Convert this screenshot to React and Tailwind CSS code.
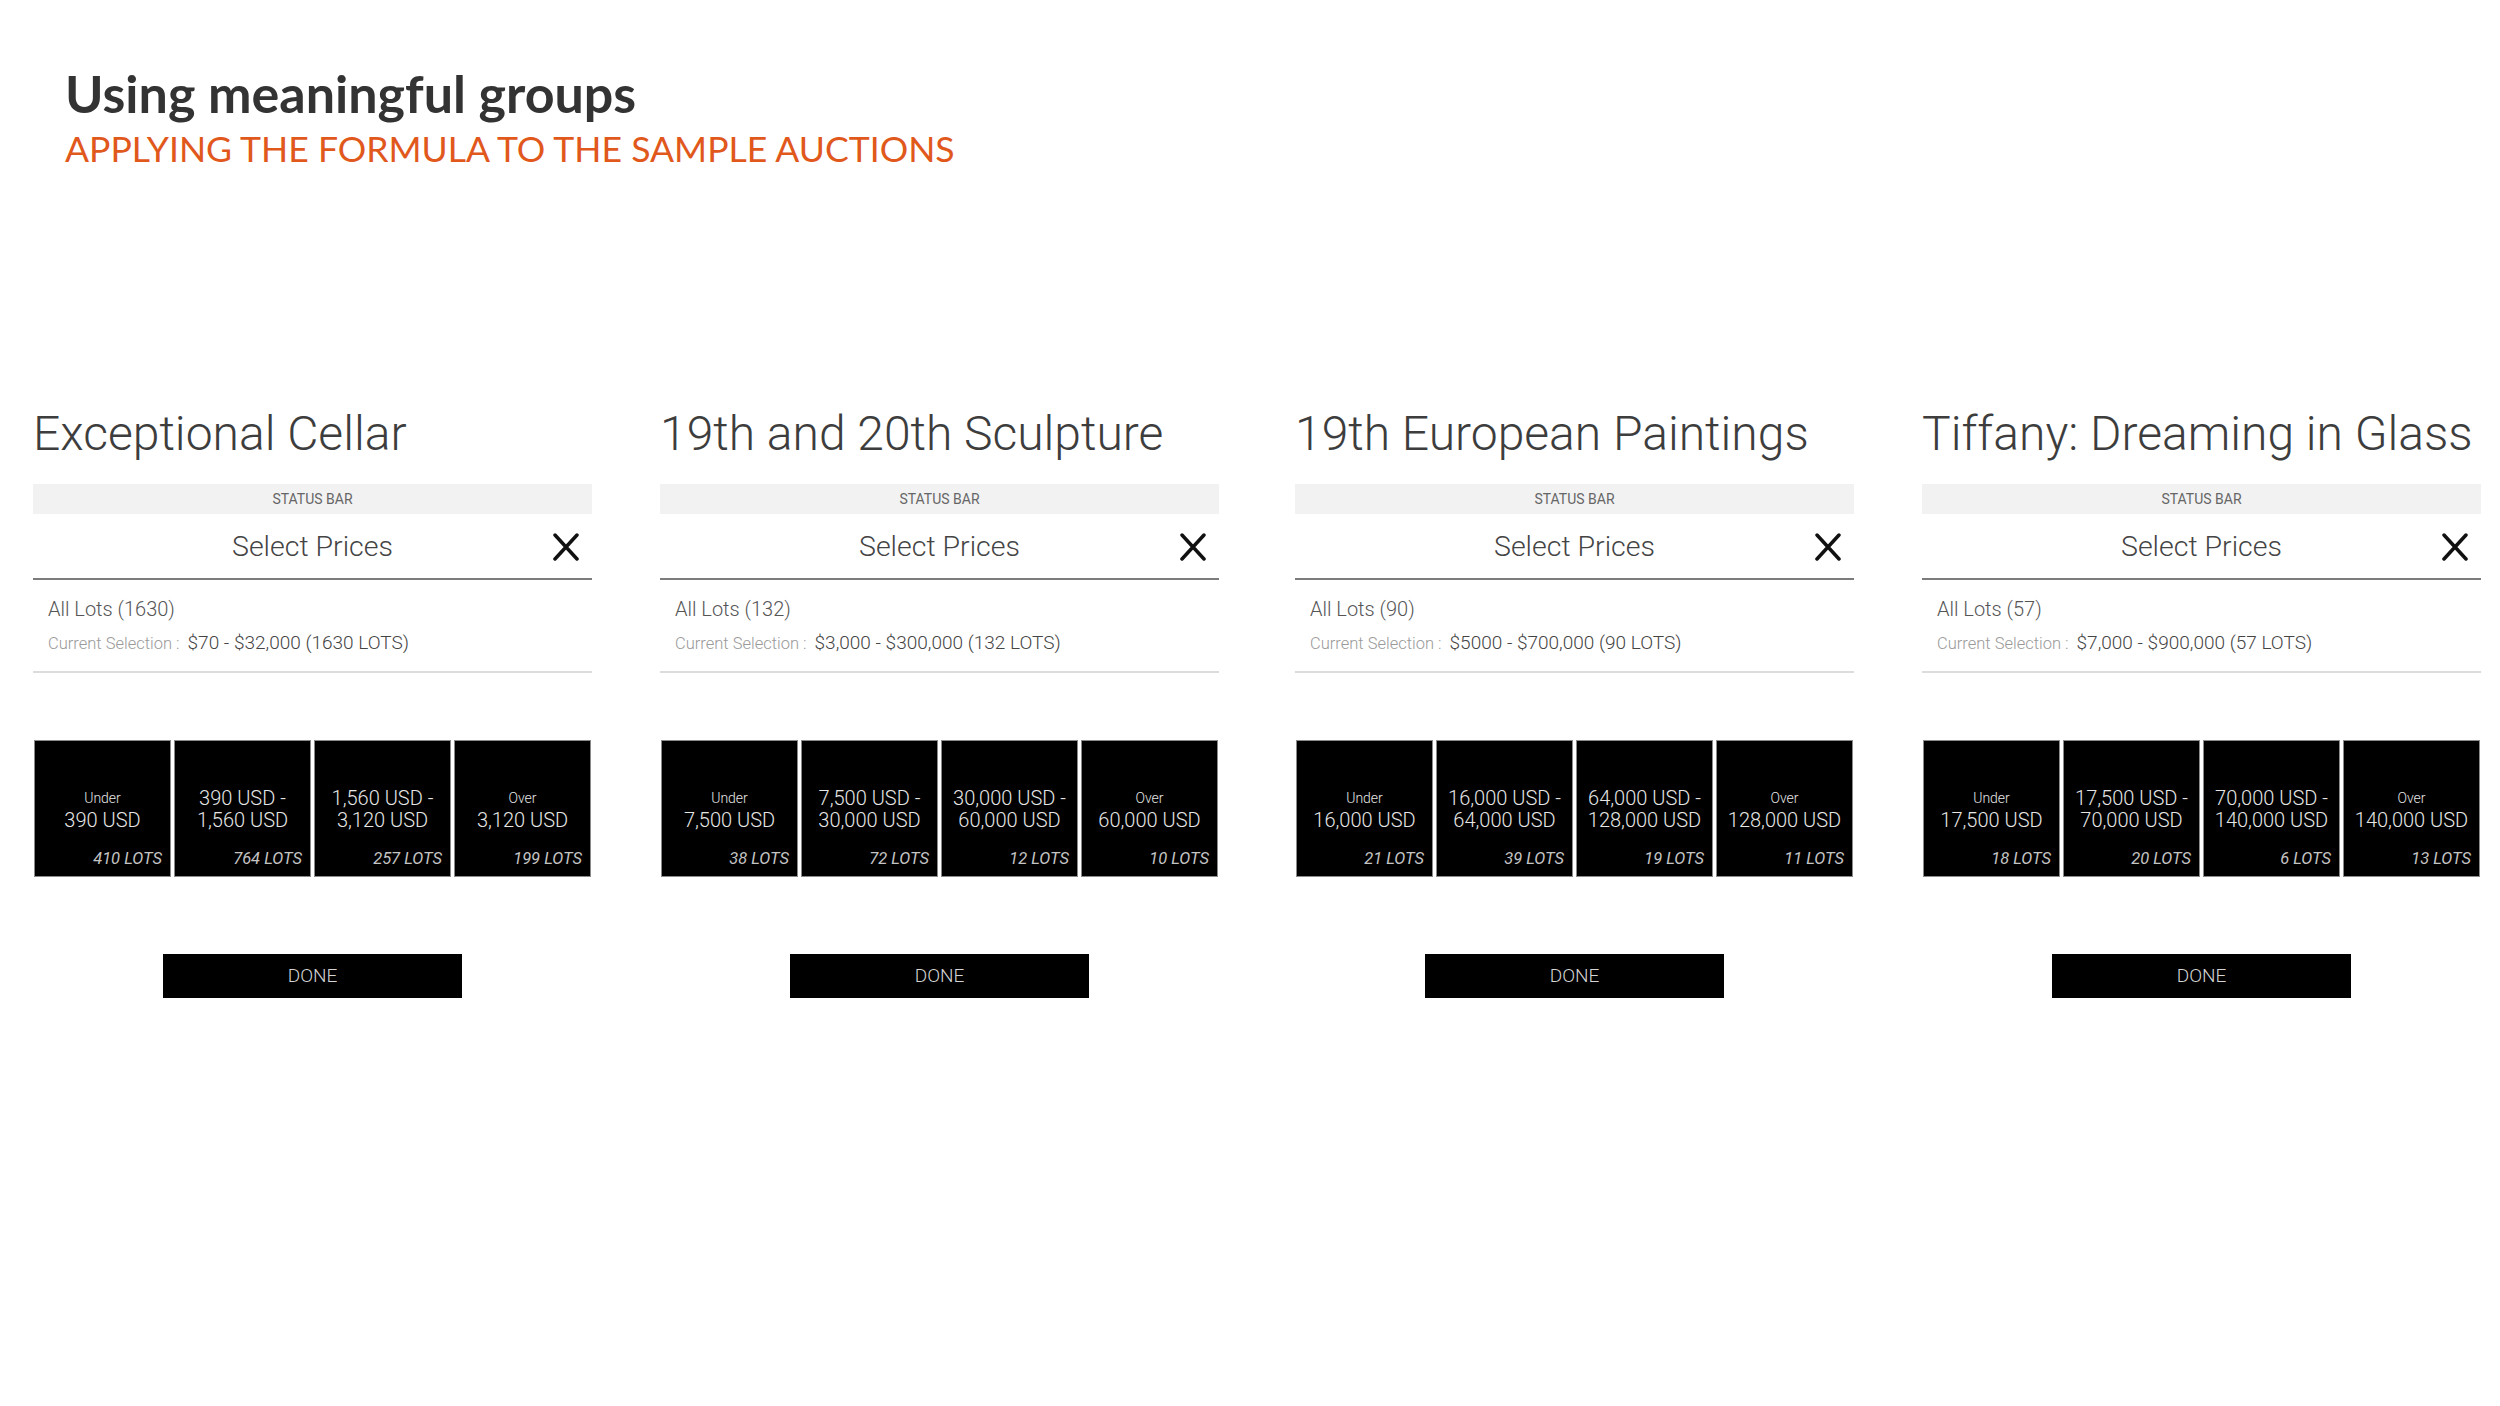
const auctions = [
  {
    name: 'Exceptional Cellar',
    all: 'All Lots (1630)',
    selection: '$70 - $32,000 (1630 LOTS)',
    ranges: [
      { top: 'Under', bottom: '390 USD', lots: '410 LOTS', small: true },
      { top: '390 USD -', bottom: '1,560 USD', lots: '764 LOTS' },
      { top: '1,560 USD -', bottom: '3,120 USD', lots: '257 LOTS' },
      { top: 'Over', bottom: '3,120 USD', lots: '199 LOTS', small: true },
    ],
  },
  {
    name: '19th and 20th Sculpture',
    all: 'All Lots (132)',
    selection: '$3,000 - $300,000 (132 LOTS)',
    ranges: [
      { top: 'Under', bottom: '7,500 USD', lots: '38 LOTS', small: true },
      { top: '7,500 USD -', bottom: '30,000 USD', lots: '72 LOTS' },
      { top: '30,000 USD -', bottom: '60,000 USD', lots: '12 LOTS' },
      { top: 'Over', bottom: '60,000 USD', lots: '10 LOTS', small: true },
    ],
  },
  {
    name: '19th European Paintings',
    all: 'All Lots (90)',
    selection: '$5000 - $700,000 (90 LOTS)',
    ranges: [
      { top: 'Under', bottom: '16,000 USD', lots: '21 LOTS', small: true },
      { top: '16,000 USD -', bottom: '64,000 USD', lots: '39 LOTS' },
      { top: '64,000 USD -', bottom: '128,000 USD', lots: '19 LOTS' },
      { top: 'Over', bottom: '128,000 USD', lots: '11 LOTS', small: true },
    ],
  },
  {
    name: 'Tiffany: Dreaming in Glass',
    all: 'All Lots (57)',
    selection: '$7,000 - $900,000 (57 LOTS)',
    ranges: [
      { top: 'Under', bottom: '17,500 USD', lots: '18 LOTS', small: true },
      { top: '17,500 USD -', bottom: '70,000 USD', lots: '20 LOTS' },
      { top: '70,000 USD -', bottom: '140,000 USD', lots: '6 LOTS' },
      { top: 'Over', bottom: '140,000 USD', lots: '13 LOTS', small: true },
    ],
  },
];

const CloseIcon = () => (
  <svg width="26" height="28" viewBox="0 0 26 28" fill="none">
    <path d="M2 2 L24 26 M24 2 L2 26" stroke="#111" strokeWidth="3.5" strokeLinecap="round" />
  </svg>
);

const PriceBox = ({ range }) => (
  <div className="relative h-[137px] bg-black border border-[#8a8a8a] flex flex-col items-center justify-center font-light text-[#e6e6e6]">
    <div className={range.small ? 'text-[14px] leading-[22px]' : 'text-[20px] leading-[22px]'}>{range.top}</div>
    <div className="text-[20px] leading-[22px]">{range.bottom}</div>
    <div className="absolute right-[8px] bottom-[8px] text-[16.5px] leading-[18px] italic font-normal text-[#c4c4c4]">{range.lots}</div>
  </div>
);

const AuctionPanel = ({ auction, className }) => (
  <div className={`w-[559px] flex flex-col ${className || ''}`}>
    <h2 className="text-[48px] leading-[48px] font-light text-[#3d3d3d] whitespace-nowrap mb-[26px]">{auction.name}</h2>

    <div className="h-[30px] bg-[#f2f2f2] flex items-center justify-center text-[14px] text-[#666]">STATUS BAR</div>

    <div className="relative h-[66px] flex items-center justify-center border-b-2 border-[#7c7c7c]">
      <span className="text-[28.5px] font-light text-[#444] translate-y-[1px]">Select Prices</span>
      <div className="absolute right-[13px] top-[19px]">
        <CloseIcon />
      </div>
    </div>

    <div className="pl-[15px] pt-[17px] pb-[15px] border-b-2 border-[#dcdcdc]">
      <div className="text-[20px] leading-[24px] font-light text-[#555]">{auction.all}</div>
      <div className="mt-[10px] flex items-baseline leading-[24px]">
        <span className="text-[16.5px] font-light text-[#9a9a9a]">Current Selection :</span>
        <span className="ml-[8px] text-[19px] font-light text-[#444]">{auction.selection}</span>
      </div>
    </div>

    <div className="mt-[67px] grid grid-cols-4 gap-[3px] px-[1px]">
      {auction.ranges.map((r, i) => (
        <PriceBox key={i} range={r} />
      ))}
    </div>

    <div className="mt-[77px] flex justify-center">
      <button className="w-[299px] h-[44px] bg-black text-[19px] font-light text-[#d4d4d4]">DONE</button>
    </div>
  </div>
);

export default function App() {
  return (
    <div className="w-[2500px] h-[1406px] bg-white overflow-hidden font-['Roboto',sans-serif]">
      <div className="pl-[65px] pt-[67px] font-['Lato',sans-serif]">
        <h1 className="text-[52px] leading-[52px] font-bold text-[#333]">Using meaningful groups</h1>
        <p className="mt-[12px] text-[35.6px] leading-[36px] text-[#e1581c]">APPLYING THE FORMULA TO THE SAMPLE AUCTIONS</p>
      </div>

      <div className="mt-[243px] pl-[33px] flex gap-[68px]">
        {auctions.map((a, i) => (
          <AuctionPanel key={a.name} auction={a} className={i === 2 ? 'ml-[8px]' : ''} />
        ))}
      </div>
    </div>
  );
}
